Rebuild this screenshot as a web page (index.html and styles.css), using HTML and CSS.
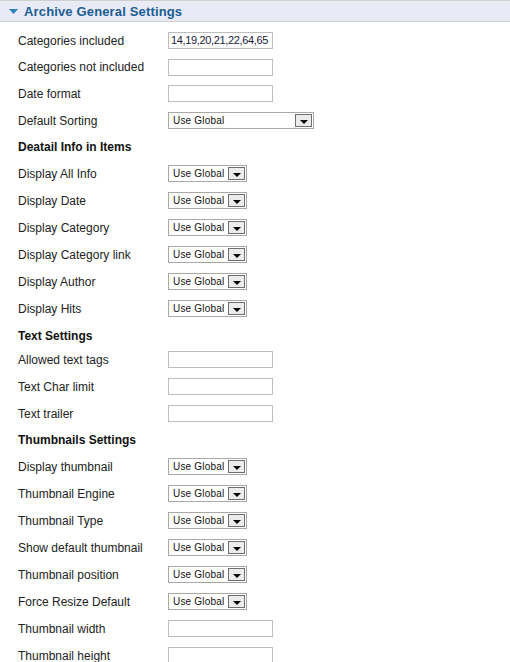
FILE: index.html
```html
<!DOCTYPE html>
<html>
<head>
<meta charset="utf-8">
<link rel="stylesheet" href="styles.css">
</head>
<body>
<div class="panel">
  <div class="panel-head">
    <svg class="caret" width="9" height="6" viewBox="0 0 9 6"><polygon points="0,0 9,0 4.5,5" fill="#2a7fc0"/></svg>
    <span class="panel-title">Archive General Settings</span>
  </div>
  <div class="rows">
    <div class="row"><span class="lbl">Categories included</span><span class="inp">14,19,20,21,22,64,65</span></div>
    <div class="row h26"><span class="lbl">Categories not included</span><span class="inp"></span></div>
    <div class="row"><span class="lbl">Date format</span><span class="inp"></span></div>
    <div class="row"><span class="lbl">Default Sorting</span><span class="sel wide"><span class="sel-text">Use Global</span><span class="sel-btn"><i></i></span></span></div>
    <div class="row head h26"><span class="lbl">Deatail Info in Items</span></div>
    <div class="row"><span class="lbl">Display All Info</span><span class="sel"><span class="sel-text">Use Global</span><span class="sel-btn"><i></i></span></span></div>
    <div class="row"><span class="lbl">Display Date</span><span class="sel"><span class="sel-text">Use Global</span><span class="sel-btn"><i></i></span></span></div>
    <div class="row"><span class="lbl">Display Category</span><span class="sel"><span class="sel-text">Use Global</span><span class="sel-btn"><i></i></span></span></div>
    <div class="row"><span class="lbl">Display Category link</span><span class="sel"><span class="sel-text">Use Global</span><span class="sel-btn"><i></i></span></span></div>
    <div class="row"><span class="lbl">Display Author</span><span class="sel"><span class="sel-text">Use Global</span><span class="sel-btn"><i></i></span></span></div>
    <div class="row"><span class="lbl">Display Hits</span><span class="sel"><span class="sel-text">Use Global</span><span class="sel-btn"><i></i></span></span></div>
    <div class="row head h24"><span class="lbl">Text Settings</span></div>
    <div class="row"><span class="lbl">Allowed text tags</span><span class="inp"></span></div>
    <div class="row"><span class="lbl">Text Char limit</span><span class="inp"></span></div>
    <div class="row"><span class="lbl">Text trailer</span><span class="inp"></span></div>
    <div class="row head h26"><span class="lbl">Thumbnails Settings</span></div>
    <div class="row"><span class="lbl">Display thumbnail</span><span class="sel"><span class="sel-text">Use Global</span><span class="sel-btn"><i></i></span></span></div>
    <div class="row"><span class="lbl">Thumbnail Engine</span><span class="sel"><span class="sel-text">Use Global</span><span class="sel-btn"><i></i></span></span></div>
    <div class="row"><span class="lbl">Thumbnail Type</span><span class="sel"><span class="sel-text">Use Global</span><span class="sel-btn"><i></i></span></span></div>
    <div class="row"><span class="lbl">Show default thumbnail</span><span class="sel"><span class="sel-text">Use Global</span><span class="sel-btn"><i></i></span></span></div>
    <div class="row"><span class="lbl">Thumbnail position</span><span class="sel"><span class="sel-text">Use Global</span><span class="sel-btn"><i></i></span></span></div>
    <div class="row"><span class="lbl">Force Resize Default</span><span class="sel"><span class="sel-text">Use Global</span><span class="sel-btn"><i></i></span></span></div>
    <div class="row"><span class="lbl">Thumbnail width</span><span class="inp"></span></div>
    <div class="row"><span class="lbl">Thumbnail height</span><span class="inp"></span></div>
  </div>
</div>
</body>
</html>
```
FILE: styles.css
```css
html, body {
  margin: 0;
  padding: 0;
  background: #fff;
}
body {
  font-family: "Liberation Sans", Arial, sans-serif;
  font-size: 12px;
  color: #222;
}
.panel-head {
  height: 20px;
  background: #e8eaf6;
  border-top: 1px solid #cfcfcf;
  border-bottom: 1px solid #cfcfcf;
  display: flex;
  align-items: center;
  padding-left: 9px;
}
.caret {
  display: block;
  margin-right: 6px;
  margin-top: 1px;
}
.panel-title {
  font-weight: bold;
  font-size: 13px;
  letter-spacing: 0.15px;
  color: #1b5d95;
}
.rows {
  padding-top: 5px;
}
.row {
  box-sizing: border-box;
  height: 27px;
  display: flex;
  align-items: center;
  padding-left: 18px;
}
.row.h26 { height: 26px; }
.row.h24 { height: 24px; padding-top: 3px; }
.lbl {
  width: 150px;
  flex: none;
}
.head .lbl {
  font-weight: bold;
  color: #111;
}
.inp {
  box-sizing: border-box;
  width: 105px;
  height: 17px;
  border: 1px solid #bdbdbd;
  font-size: 11px;
  letter-spacing: -0.35px;
  line-height: 15px;
  padding-left: 2px;
  color: #1a1a3a;
  white-space: nowrap;
  overflow: hidden;
}
.sel {
  box-sizing: border-box;
  width: 79px;
  height: 17px;
  border: 1px solid #a8a8a8;
  display: flex;
  align-items: stretch;
  justify-content: space-between;
  font-size: 10px;
}
.sel.wide {
  width: 146px;
  height: 17px;
}
.sel-text {
  padding-left: 4px;
  line-height: 15px;
  letter-spacing: 0.2px;
  color: #111;
}
.sel-btn {
  box-sizing: border-box;
  width: 17px;
  margin: 1px;
  border: 1px solid #6f6f6f;
  background: #ececec;
  display: flex;
  align-items: center;
  justify-content: center;
}
.sel-btn i {
  display: block;
  width: 0;
  height: 0;
  margin-top: 2px;
  border-left: 4px solid transparent;
  border-right: 4px solid transparent;
  border-top: 4px solid #000;
}
```
